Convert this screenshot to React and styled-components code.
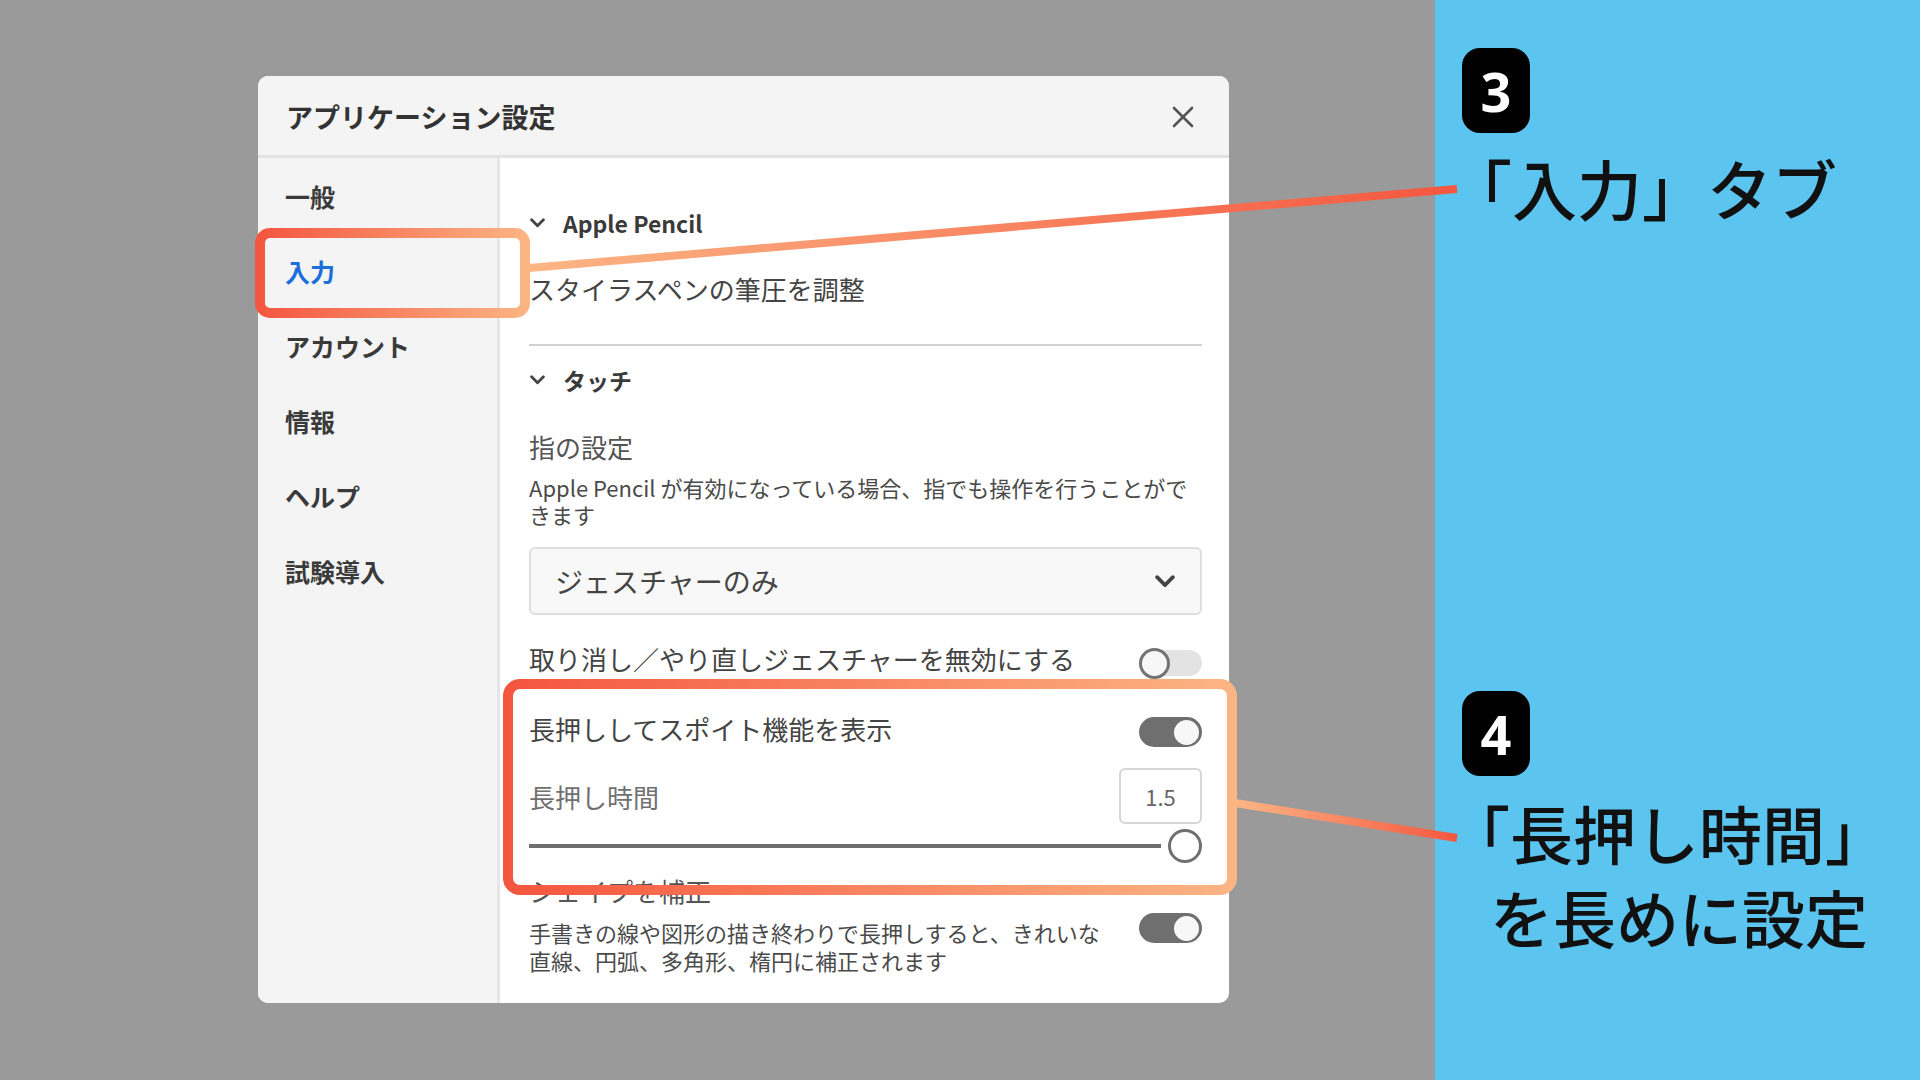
import styled, { createGlobalStyle } from "styled-components";

const GlobalStyle = createGlobalStyle`
  html, body {
    margin: 0;
    padding: 0;
  }
  body {
    background: #9a9a9a;
    font-family: "Noto Sans CJK JP", "Noto Sans", sans-serif;
  }
`;

const Screen = styled.div`
  position: relative;
  display: flex;
  width: 1920px;
  height: 1080px;
  overflow: hidden;
  background: #9a9a9a;
`;

const Stage = styled.div`
  flex: 1;
  padding: 76px 0 0 258px;
`;

const Dialog = styled.div`
  display: flex;
  flex-direction: column;
  width: 971px;
  height: 927px;
  background: #fff;
  border-radius: 10px;
  overflow: hidden;
`;

const DialogHeader = styled.header`
  display: flex;
  flex-shrink: 0;
  align-items: center;
  justify-content: space-between;
  height: 82px;
  padding: 2px 34px 0 28px;
  box-sizing: border-box;
  background: #f4f4f4;
  border-bottom: 3px solid #e2e2e2;
`;

const Title = styled.h1`
  margin: 0;
  font-size: 27px;
  font-weight: 700;
  color: #333;
`;

const CloseButton = styled.button`
  display: flex;
  padding: 0;
  border: none;
  background: none;
`;

const DialogBody = styled.div`
  display: flex;
  flex: 1;
  min-height: 0;
`;

const Sidebar = styled.nav`
  width: 239px;
  flex-shrink: 0;
  background: #f4f4f4;
  border-right: 3px solid #e6e6e6;
`;

const NavItem = styled.div`
  display: flex;
  align-items: center;
  height: 75px;
  padding-left: 27px;
  font-size: 25px;
  font-weight: 700;
  color: ${(p) => (p.$active ? "#1a6fdb" : "#3a3a3a")};
`;

const Content = styled.div`
  flex: 1;
  padding: 45px 27px 0 29px;
  overflow: hidden;
`;

const SectionHeader = styled.div`
  display: flex;
  align-items: center;
  gap: 18px;
  height: 40px;
  margin-top: ${(p) => p.$mt || 0}px;
  padding-left: 1px;
  font-size: 23px;
  font-weight: 700;
  color: #3a3a3a;
`;

const Row = styled.div`
  display: flex;
  align-items: center;
  justify-content: space-between;
  gap: 20px;
  height: ${(p) => p.$h || 40}px;
  margin-top: ${(p) => p.$mt || 0}px;
  font-size: 26px;
  color: ${(p) => p.$tone || "#444"};
`;

const Divider = styled.hr`
  height: 2px;
  margin: 36px 0 0;
  border: none;
  background: #d2d2d2;
`;

const Description = styled.p`
  margin: ${(p) => p.$mt || 0}px 0 0;
  font-size: 22px;
  line-height: ${(p) => p.$lh || 27}px;
  color: #4a4a4a;
`;

const Select = styled.div`
  display: flex;
  align-items: center;
  justify-content: space-between;
  height: 68px;
  margin-top: 19px;
  padding: 0 25px 0 24px;
  box-sizing: border-box;
  background: #f8f8f8;
  border: 2px solid #dedede;
  border-radius: 6px;
  font-size: 28px;
  color: #444;
`;

const Track = styled.div`
  display: flex;
  flex-shrink: 0;
  align-items: center;
  justify-content: ${(p) => (p.$on ? "flex-end" : "flex-start")};
  width: 63px;
  height: ${(p) => (p.$on ? 30 : 26)}px;
  margin-top: ${(p) => p.$drop || 0}px;
  padding: ${(p) => (p.$on ? "0 3px" : "0")};
  box-sizing: border-box;
  border-radius: 15px;
  background: ${(p) => (p.$on ? "#6f6f6f" : "#e3e3e3")};
`;

const Knob = styled.span`
  flex-shrink: 0;
  width: ${(p) => (p.$on ? 25 : 31)}px;
  height: ${(p) => (p.$on ? 25 : 31)}px;
  box-sizing: border-box;
  border-radius: 50%;
  background: #f7f7f7;
  border: ${(p) => (p.$on ? "none" : "3px solid #737373")};
`;

const NumberBox = styled.div`
  display: flex;
  flex-shrink: 0;
  align-items: center;
  justify-content: center;
  width: 83px;
  height: 56px;
  box-sizing: border-box;
  border: 2px solid #d6d6d6;
  border-radius: 6px;
  font-size: 22px;
  color: #666;
`;

const SliderRow = styled.div`
  display: flex;
  align-items: center;
  gap: 7px;
  height: 34px;
  margin-top: 5px;
`;

const SliderTrack = styled.div`
  flex: 1;
  height: 4px;
  background: #6f6f6f;
`;

const SliderThumb = styled.span`
  width: 34px;
  height: 34px;
  box-sizing: border-box;
  border-radius: 50%;
  background: #fff;
  border: 3px solid #707070;
`;

const OptionRow = styled.div`
  display: flex;
  align-items: flex-start;
  justify-content: space-between;
  gap: 29px;
  margin-top: 2px;
`;

const SidePanel = styled.aside`
  display: flex;
  flex-direction: column;
  width: 485px;
  flex-shrink: 0;
  padding: 48px 0 0 12px;
  box-sizing: border-box;
  background: #5bc4ef;
`;

const Step = styled.div`
  margin-top: ${(p) => p.$mt || 0}px;
`;

const Badge = styled.div`
  display: flex;
  align-items: center;
  justify-content: center;
  width: 68px;
  height: 85px;
  margin-left: 15px;
  border-radius: 18px;
  background: #000;
  color: #fff;
  font-family: "Noto Sans", sans-serif;
  font-size: 54px;
  font-weight: 700;
`;

const Caption = styled.div`
  margin-top: ${(p) => p.$mt || 12}px;
  font-size: ${(p) => p.$size || 63}px;
  font-weight: 500;
  line-height: 84px;
  color: #111;
  white-space: nowrap;
`;

const CaptionLine = styled.span`
  display: block;
  padding-left: ${(p) => p.$indent || 0}px;
`;

const Overlay = styled.svg`
  position: absolute;
  inset: 0;
  pointer-events: none;
`;

const Chevron = ({ w = 15, h = 10, color = "#444" }) => (
  <svg width={w} height={h} viewBox="0 0 14 9" preserveAspectRatio="none">
    <polyline
      points="1.5,1.5 7,7 12.5,1.5"
      fill="none"
      stroke={color}
      strokeWidth="2.6"
      strokeLinecap="round"
      strokeLinejoin="round"
    />
  </svg>
);

const CloseIcon = () => (
  <svg width="24" height="24" viewBox="0 0 24 24">
    <path d="M3 3 L21 21 M21 3 L3 21" stroke="#555" strokeWidth="2.6" strokeLinecap="round" />
  </svg>
);

const Toggle = ({ on, drop }) => (
  <Track $on={on} $drop={drop}>
    <Knob $on={on} />
  </Track>
);

const navItems = ["一般", "入力", "アカウント", "情報", "ヘルプ", "試験導入"];

export default function App() {
  return (
    <Screen>
      <GlobalStyle />
      <Stage>
        <Dialog>
          <DialogHeader>
            <Title>アプリケーション設定</Title>
            <CloseButton>
              <CloseIcon />
            </CloseButton>
          </DialogHeader>
          <DialogBody>
            <Sidebar>
              {navItems.map((label) => (
                <NavItem key={label} $active={label === "入力"}>
                  {label}
                </NavItem>
              ))}
            </Sidebar>
            <Content>
              <SectionHeader>
                <Chevron />
                Apple Pencil
              </SectionHeader>
              <Row $mt={25}>スタイラスペンの筆圧を調整</Row>
              <Divider />
              <SectionHeader $mt={14}>
                <Chevron />
                タッチ
              </SectionHeader>
              <Row $mt={28} $h={36} $tone="#555">
                指の設定
              </Row>
              <Description $mt={10}>
                Apple Pencil が有効になっている場合、指でも操作を行うことができます
              </Description>
              <Select>
                ジェスチャーのみ
                <Chevron w={20} h={13} />
              </Select>
              <Row $mt={23}>
                取り消し／やり直しジェスチャーを無効にする
                <Toggle drop={10} />
              </Row>
              <Row $mt={30}>
                長押ししてスポイト機能を表示
                <Toggle on drop={8} />
              </Row>
              <Row $mt={20} $h={56} $tone="#707070">
                長押し時間
                <NumberBox>1.5</NumberBox>
              </Row>
              <SliderRow>
                <SliderTrack />
                <SliderThumb />
              </SliderRow>
              <Row $mt={9} $h={36} $tone="#555">
                シェイプを補正
              </Row>
              <OptionRow>
                <Description $mt={8} $lh={28}>
                  手書きの線や図形の描き終わりで長押しすると、きれいな直線、円弧、多角形、楕円に補正されます
                </Description>
                <Toggle on drop={3} />
              </OptionRow>
            </Content>
          </DialogBody>
        </Dialog>
      </Stage>

      <SidePanel>
        <Step>
          <Badge>3</Badge>
          <Caption $size={65}>
            <CaptionLine>「入力」タブ</CaptionLine>
          </Caption>
        </Step>
        <Step $mt={462}>
          <Badge>4</Badge>
          <Caption $mt={14}>
            <CaptionLine>「長押し時間」</CaptionLine>
            <CaptionLine $indent={43}>を長めに設定</CaptionLine>
          </Caption>
        </Step>
      </SidePanel>

      <Overlay width="1920" height="1080" viewBox="0 0 1920 1080">
        <defs>
          <linearGradient id="boxA" gradientUnits="userSpaceOnUse" x1="255" y1="0" x2="530" y2="0">
            <stop offset="0" stopColor="#f4553e" />
            <stop offset="1" stopColor="#fcb584" />
          </linearGradient>
          <linearGradient id="boxB" gradientUnits="userSpaceOnUse" x1="502" y1="0" x2="1237" y2="0">
            <stop offset="0" stopColor="#f4553e" />
            <stop offset="1" stopColor="#fcb584" />
          </linearGradient>
          <linearGradient id="lineA" gradientUnits="userSpaceOnUse" x1="529" y1="0" x2="1457" y2="0">
            <stop offset="0" stopColor="#fcb584" />
            <stop offset="1" stopColor="#f4573f" />
          </linearGradient>
          <linearGradient id="lineB" gradientUnits="userSpaceOnUse" x1="1237" y1="0" x2="1457" y2="0">
            <stop offset="0" stopColor="#fcb584" />
            <stop offset="1" stopColor="#f4573f" />
          </linearGradient>
        </defs>
        <line x1="529" y1="268" x2="1457" y2="189" stroke="url(#lineA)" strokeWidth="8" />
        <line x1="1235" y1="803" x2="1457" y2="838" stroke="url(#lineB)" strokeWidth="8" />
        <rect x="260" y="233" width="265" height="80" rx="10" fill="none" stroke="url(#boxA)" strokeWidth="10" />
        <rect x="508" y="684" width="724" height="206" rx="12" fill="none" stroke="url(#boxB)" strokeWidth="10" />
      </Overlay>
    </Screen>
  );
}
